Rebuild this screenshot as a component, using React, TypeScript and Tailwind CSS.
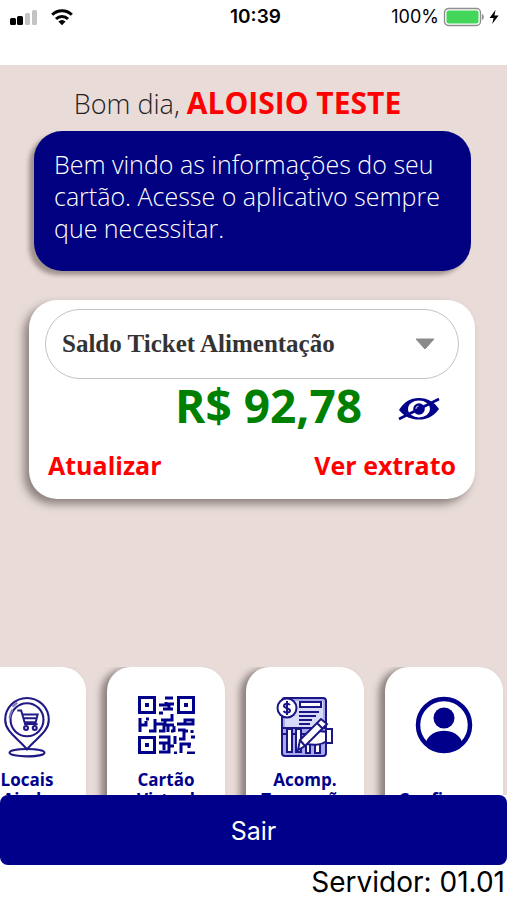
import type { ReactNode } from "react";

type Shortcut = {
  id: string;
  lines: string[];
  icon: ReactNode;
};

function StatusBar() {
  return (
    <header className="grid h-[65px] shrink-0 grid-cols-3 items-start bg-white px-2 pt-[5px] font-['Inter',sans-serif] text-black">
      <div className="flex h-6 items-center gap-3">
        <svg width="30" height="18" viewBox="0 0 30 18" aria-label="Sinal">
          <rect x="2" y="10" width="6" height="7" rx="1.5" />
          <rect x="9" y="8" width="6" height="9" rx="1.5" />
          <rect x="17" y="5" width="5" height="12" rx="1.5" fill="#c4c4c4" />
          <rect x="24" y="2" width="5" height="15" rx="1.5" fill="#c4c4c4" />
        </svg>
        <svg width="24" height="18" viewBox="0 0 24 18" aria-label="Wi-Fi">
          <g fill="none" stroke="#000" strokeWidth="3">
            <path d="M2.2 6.8a14 14 0 0 1 19.6 0" />
            <path d="M6 11a8.6 8.6 0 0 1 12 0" />
          </g>
          <path d="M8.4 13.6a5 5 0 0 1 7.2 0L12 17.2z" />
        </svg>
      </div>
      <p className="pl-1 text-center text-[19px] leading-6 font-semibold">10:39</p>
      <div className="flex h-6 items-center justify-end gap-1">
        <span className="text-lg leading-6">100%</span>
        <svg width="42" height="20" viewBox="0 0 42 20" aria-label="Bateria">
          <rect x="1.5" y="1.5" width="36" height="17" rx="4" fill="#fff" stroke="#8f8f8f" strokeWidth="1.4" />
          <rect x="3.5" y="3.5" width="32" height="13" rx="2" fill="#43d65b" />
          <path d="M39 7v6c2.4-.6 2.4-5.4 0-6z" fill="#8f8f8f" />
        </svg>
        <svg width="10" height="16" viewBox="0 0 10 16" aria-label="Carregando">
          <path d="M6.6.8.6 9h4L3.2 15 9.6 6.6H5.4z" />
        </svg>
      </div>
    </header>
  );
}

function EyeOffIcon() {
  return (
    <svg width="42" height="24" viewBox="0 0 42 24" aria-hidden="true">
      <path d="M1 13C6 5 12 1 21 1s15 4 20 11c-6 8-12 10.5-20 10.5S7 20 1 13z" fill="#00008b" />
      <path d="M10 12a11 8.500 0 0 1 22 0 11 8.500 0 0 1-22 0z" fill="#fff" />
      <circle cx="21" cy="12" r="5.8" fill="#00008b" />
      <path d="M18 12a3 3 0 0 1 2.5-3" fill="none" stroke="#b9b9e6" strokeWidth="1.2" />
      <path d="M1 22 41 2" stroke="#00008b" strokeWidth="2.6" />
    </svg>
  );
}

function PlacesIcon() {
  return (
    <svg width="48" height="62" viewBox="0 0 48 64" fill="none" stroke="#1f1a86" strokeWidth="2.2" aria-hidden="true">
      <path d="M24 55C14 43 1.5 37 1.5 24.5a22.5 22.5 0 0 1 45 0C46.5 37 34 43 24 55z" />
      <circle cx="24" cy="24.5" r="17" />
      <ellipse cx="24" cy="58.5" rx="18" ry="3.8" />
      <path d="M6 23a18 18 0 0 1 3-9M9 11l5-4" stroke="#7c79c0" />
      <path d="M14 15h4l4 14h13M19 19h16l-2 8H21M21 23h13" strokeWidth="2" />
      <circle cx="23" cy="33" r="2" />
      <circle cx="32" cy="33" r="2" />
    </svg>
  );
}

function QrFinder({ x, y }: { x: number; y: number }) {
  return (
    <g>
      <rect x={x + 1.5} y={y + 1.5} width="15" height="15" fill="none" stroke="#00008b" strokeWidth="3" />
      <rect x={x + 7} y={y + 7} width="4" height="4" fill="#00008b" />
    </g>
  );
}

function QrIcon() {
  return (
    <svg width="57" height="58" viewBox="0 0 57 58" aria-hidden="true">
      <QrFinder x={0} y={0} />
      <QrFinder x={39} y={0} />
      <QrFinder x={0} y={40} />
      <g fill="none" stroke="#00008b" strokeWidth="3">
        <path d="M27 2h8M21 9h7v-3M25 13h6v-5h5M29 13h6" />
        <path d="M21 17h4M34 18v6H23M27 24v5h9" />
        <path d="M2 22v14M2 29h6v-4M8 23h3M11 35h6v-7h9v7h-5M17 23v5" />
        <path d="M30 29v7M36 30v6M33 35h3" />
        <path d="M39 28h8v-4h8v4h-4M47 28h9" />
        <path d="M40 34h6v9h-5M37 40v8M46 35h4" />
        <path d="M54 34v3M53 41h4" />
        <path d="M21 41h10v6h-7M21 56h10V50h5M21 47h5v7M31 50v6M36 57h3" />
        <path d="M43 57v-9h8v4M47 48h6M49 57h8" />
      </g>
    </svg>
  );
}

function StatementIcon() {
  return (
    <svg width="58" height="62" viewBox="0 0 58 62" fill="none" stroke="#1a1685" strokeWidth="2" aria-hidden="true">
      <rect x="6" y="2" width="44" height="58" rx="3" fill="#a9a9ee" />
      <rect x="9" y="5" width="38" height="26" fill="#d9d9f8" stroke="none" />
      <path d="M6 32h43M6 38h43" />
      <path d="M11 33h5v23h-5zM20 33h5v23h-5zM30 45h4v12h-4zM39 45h5v12h-5z" fill="#fff" />
      <rect x="24" y="6" width="21" height="5" fill="#fff" />
      <path d="M23 16h20M23 20h17M23 24h13M23 28h11" />
      <circle cx="11" cy="12" r="9.5" fill="#fff" />
      <path d="M14 9c-1.5-2-6-1.5-6 1s6 2 6 4.5-5 3-6.5.5M11 5v14" />
      <path d="M29 45c4-6 9-10 14-10l8 1v9c-7 5-14 4-22 3z" fill="#fff" />
      <path d="m24 44 21-21 6 5-22 22-7 4zM41 27l5 5M24 44l5 6" fill="#fff" />
      <path d="M50 33h6v14h-6z" fill="#fff" />
    </svg>
  );
}

function ProfileIcon() {
  return (
    <svg width="58" height="58" viewBox="0 0 58 58" aria-hidden="true">
      <circle cx="29" cy="29" r="26" fill="#fff" stroke="#00008b" strokeWidth="4.5" />
      <circle cx="29" cy="22" r="10.5" fill="#00008b" />
      <path d="M11 46c5-15 31-15 36 0-9 13-27 13-36 0z" fill="#00008b" />
    </svg>
  );
}

const shortcuts: Shortcut[] = [
  { id: "locais", lines: ["Locais", "Ajuda"], icon: <PlacesIcon /> },
  { id: "cartao", lines: ["Cartão", "Virtual"], icon: <QrIcon /> },
  { id: "acomp", lines: ["Acomp.", "Transação"], icon: <StatementIcon /> },
  { id: "config", lines: ["", "Configurar"], icon: <ProfileIcon /> },
];

export default function App() {
  return (
    <div className="flex min-h-screen flex-col bg-white font-['Open_Sans',sans-serif]">
      <StatusBar />

      <main className="flex flex-1 flex-col bg-[#e8dbd8]">
        <h1 className="mr-8 pt-5 text-center text-[27px] leading-9 font-light text-[#222]">
          Bom dia, <strong className="text-[30px] font-bold text-[#ff0000]">ALOISIO TESTE</strong>
        </h1>

        <p className="mt-[9px] mr-9 ml-[34px] min-h-[140px] rounded-[28px] bg-[#000080] px-5 py-[17px] text-[25px] leading-8 font-light text-white shadow-[-5px_4px_4px_#a1938f]">
          Bem vindo as informações do seu cartão. Acesse o aplicativo sempre que necessitar.
        </p>

        <section className="mt-[29px] mr-8 ml-[29px] rounded-[28px] bg-white px-4 pt-[9px] pb-4 shadow-[-5px_5px_8px_#8c807d]">
          <div className="relative">
            <select
              aria-label="Tipo de saldo"
              className="block h-[70px] w-full appearance-none rounded-full border border-[#c4c4c4] bg-white px-4 font-['Liberation_Serif',serif] text-[25px] font-bold text-[#333]"
            >
              <option>Saldo Ticket Alimentação</option>
            </select>
            <svg width="20" height="12" viewBox="0 0 20 12" className="pointer-events-none absolute top-[29px] right-6" aria-hidden="true">
              <path d="M1 1h18l-9 10z" fill="#8a8a8a" stroke="#8a8a8a" strokeLinejoin="round" />
            </svg>
          </div>
          <div className="flex items-center justify-end gap-9 pr-[19px]">
            <output className="text-[46px] leading-[52px] font-bold text-[#008000]">R$ 92,78</output>
            <button type="button" aria-label="Ocultar saldo" className="pt-2">
              <EyeOffIcon />
            </button>
          </div>
          <div className="mt-4 flex justify-between px-[3px] text-[25px] leading-9 font-bold text-[#ff0000]">
            <button type="button">Atualizar</button>
            <button type="button">Ver extrato</button>
          </div>
        </section>

        <nav className="mt-auto flex h-32 justify-end gap-[21px] overflow-hidden pr-1">
          {shortcuts.map((item) => (
            <a
              key={item.id}
              href={`#${item.id}`}
              className="flex h-44 w-[118px] shrink-0 flex-col items-center rounded-[24px] bg-white pt-[29px] shadow-[-6px_2px_7px_#8c807d]"
            >
              <span className="flex h-[62px] items-start justify-center">{item.icon}</span>
              <span className="mt-3 text-center text-[17px] leading-5 font-bold text-[#00008b]">
                {item.lines.map((line) => (
                  <span key={line} className="block min-h-5">
                    {line}
                  </span>
                ))}
              </span>
            </a>
          ))}
        </nav>
      </main>

      <footer className="font-['Inter',sans-serif]">
        <button type="button" className="block h-[70px] w-full rounded-lg bg-[#00008b] pt-1 text-[25px] text-white">
          Sair
        </button>
        <p className="pr-[2px] text-right text-[28px] leading-[35px] text-black">Servidor: 01.01</p>
      </footer>
    </div>
  );
}
